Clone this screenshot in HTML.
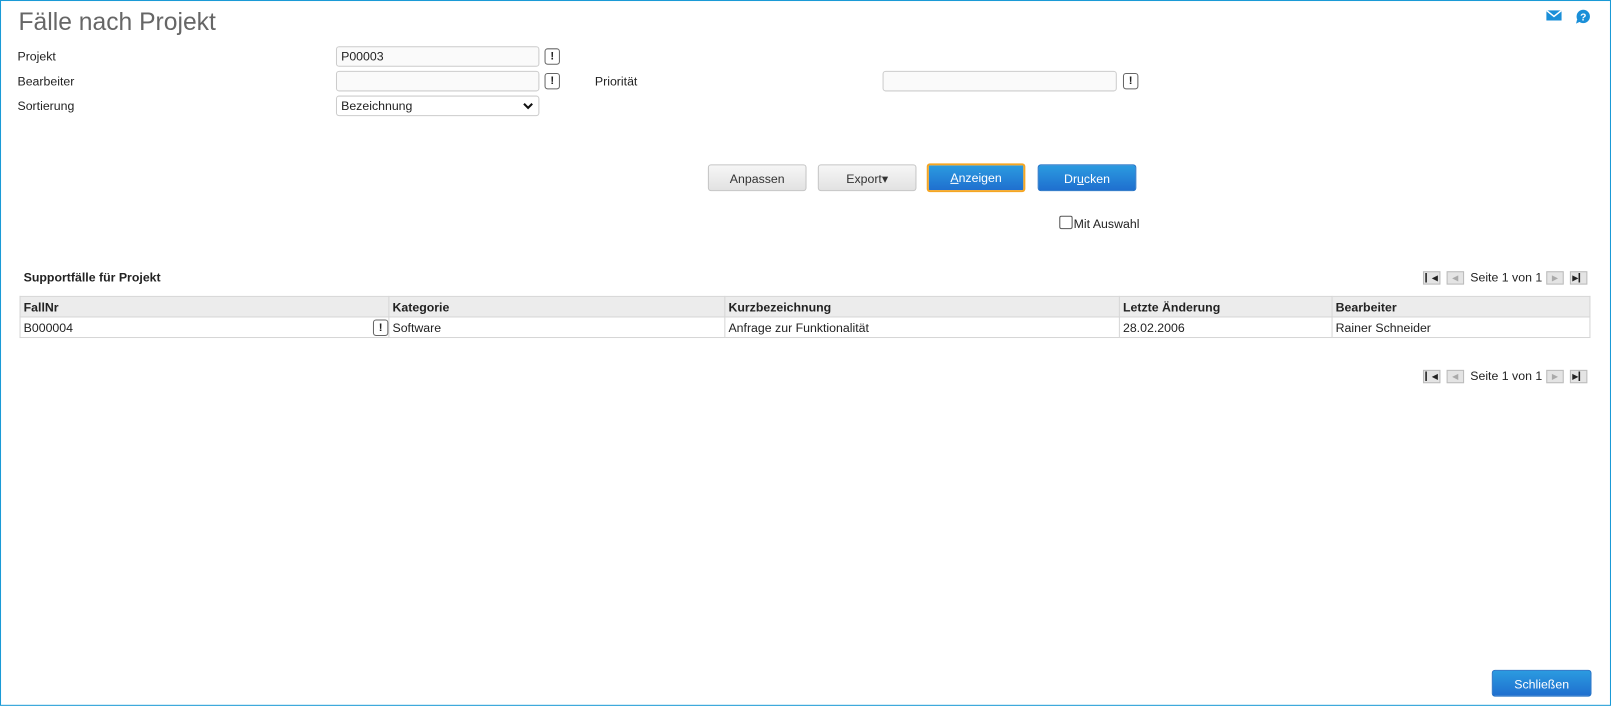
<!DOCTYPE html>
<html><head><meta charset="utf-8">
<style>
html,body{margin:0;padding:0;background:#fff;overflow:hidden;width:1611px;height:706px}
#w{position:absolute;left:0;top:0;width:1568px;height:687px;transform:scale(1.02742);transform-origin:0 0;font-family:"Liberation Sans",Arial,sans-serif;font-size:12px;color:#222}
#frame{position:absolute;left:0;top:0;width:1566px;height:685px;border:1px solid #1a9ad6}
.a{position:absolute;white-space:nowrap}
.inp{position:absolute;height:18px;border:1px solid #ccc;border-radius:3px;background:#fafafa;box-sizing:content-box;line-height:18px;padding-left:4px;font-size:12px}
.ex{position:absolute;width:13px;height:14px;border:1px solid #666;border-radius:3px;background:#fff;font-weight:bold;font-size:11px;line-height:14px;text-align:center}
.btn{position:absolute;height:26px;width:96px;border-radius:3px;text-align:center;line-height:26px;font-size:12px;box-sizing:border-box}
.g{background:linear-gradient(#f6f6f6,#e2e2e2);border:1px solid #c4c4c4;color:#333}
.b{background:linear-gradient(#2b9be0,#1f6fcf);border:1px solid #1f6fc5;color:#fff}
table{border-collapse:collapse;position:absolute;left:19px;top:288px;width:1529px;font-size:12px}
td,th{border:1px solid #d6d6d6;height:19px;padding:0 3px;text-align:left}
th{background:#ececec;font-weight:bold}
.pg{position:absolute;width:15px;height:11px;border:1px solid #bbb;background:#e4e4e4;font-size:8px;line-height:11px;text-align:center;color:#222}
</style></head><body><div id="w">
<div id="frame"></div>
<div class="a" style="left:18px;top:8px;font-size:24px;color:#666">Fälle nach Projekt</div>
<svg class="a" style="left:1505px;top:10px" width="15" height="10" viewBox="0 0 15 10"><rect width="15" height="10" fill="#1a8fd8"/><path d="M0 0 L7.5 6 L15 0" fill="none" stroke="#fff" stroke-width="1.5"/></svg>
<svg class="a" style="left:1533px;top:9px" width="15" height="15" viewBox="0 0 15 15"><circle cx="8" cy="7" r="6.5" fill="#1a8fd8"/><path d="M2 10 L1 14 L5 12Z" fill="#1a8fd8"/><text x="8" y="11" font-size="10" font-weight="bold" fill="#fff" text-anchor="middle" font-family="Liberation Sans">?</text></svg>

<div class="a" style="left:17px;top:48px">Projekt</div>
<div class="a" style="left:17px;top:72px">Bearbeiter</div>
<div class="a" style="left:17px;top:96px">Sortierung</div>
<div class="inp" style="left:327px;top:45px;width:192px">P00003</div>
<div class="ex" style="left:530px;top:47px">!</div>
<div class="inp" style="left:327px;top:69px;width:192px"></div>
<div class="ex" style="left:530px;top:71px">!</div>
<div class="inp" style="left:327px;top:93px;width:192px;background:#fff">Bezeichnung<svg style="position:absolute;right:5px;top:6px" width="10" height="7" viewBox="0 0 10 7"><path d="M1 1 L5 5 L9 1" fill="none" stroke="#111" stroke-width="2"/></svg></div>
<div class="a" style="left:579px;top:72px">Priorität</div>
<div class="inp" style="left:859px;top:69px;width:222px"></div>
<div class="ex" style="left:1093px;top:71px">!</div>

<div class="btn g" style="left:689px;top:160px">Anpassen</div>
<div class="btn g" style="left:796px;top:160px">Export&#9662;</div>
<div class="btn b" style="left:902px;top:159px;height:28px;border:2px solid #f5a623;line-height:24px"><u>A</u>nzeigen</div>
<div class="btn b" style="left:1010px;top:160px">Dr<u>u</u>cken</div>
<div class="a" style="left:1031px;top:210px;width:11px;height:11px;border:1px solid #555;border-radius:2px"></div>
<div class="a" style="left:1045px;top:211px">Mit Auswahl</div>

<div class="a" style="left:23px;top:263px;font-weight:bold">Supportfälle für Projekt</div>
<div class="pg" style="left:1385px;top:264px">&#9614;&#9664;</div>
<div class="pg" style="left:1408px;top:264px;color:#aaa">&#9664;</div>
<div class="a" style="left:1431px;top:263px">Seite 1 von 1</div>
<div class="pg" style="left:1505px;top:264px;color:#aaa">&#9654;</div>
<div class="pg" style="left:1528px;top:264px">&#9654;&#9614;</div>

<table>
<tr><th style="width:352px">FallNr</th><th style="width:320px">Kategorie</th><th style="width:377px">Kurzbezeichnung</th><th style="width:200px">Letzte Änderung</th><th>Bearbeiter</th></tr>
<tr><td style="position:relative">B000004<div class="ex" style="right:0px;top:2px">!</div></td><td>Software</td><td>Anfrage zur Funktionalität</td><td>28.02.2006</td><td>Rainer Schneider</td></tr>
</table>

<div class="pg" style="left:1385px;top:360px">&#9614;&#9664;</div>
<div class="pg" style="left:1408px;top:360px;color:#aaa">&#9664;</div>
<div class="a" style="left:1431px;top:359px">Seite 1 von 1</div>
<div class="pg" style="left:1505px;top:360px;color:#aaa">&#9654;</div>
<div class="pg" style="left:1528px;top:360px">&#9654;&#9614;</div>

<div class="btn b" style="left:1452px;top:652px;width:97px">Schließen</div>
</div></body></html>
